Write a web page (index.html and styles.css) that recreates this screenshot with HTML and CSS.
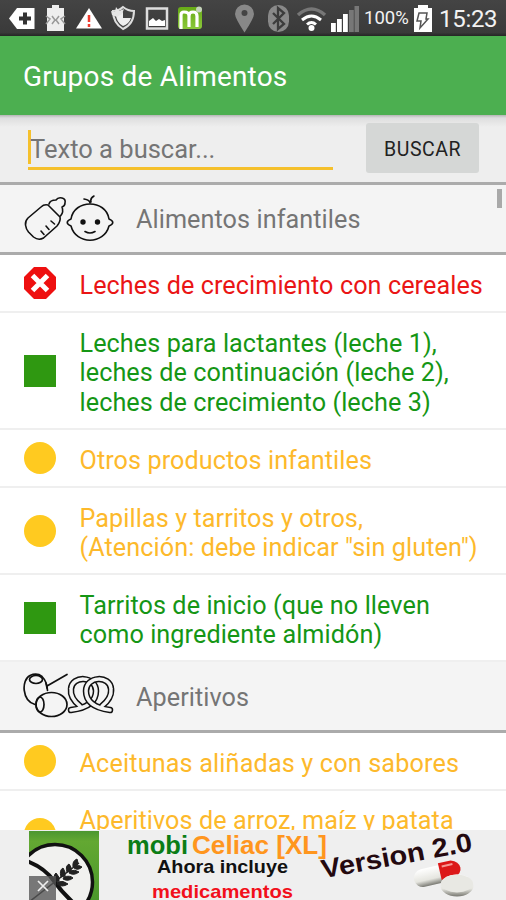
FILE: index.html
```html
<!DOCTYPE html>
<html lang="es">
<head>
    <meta charset="UTF-8">
    <meta name="viewport" content="width=device-width, initial-scale=1.0">
    <title>Grupos de Alimentos</title>
    <link rel="stylesheet" href="styles.css">
</head>
<body>
    <div class="screen">
        <div class="status-bar">
            <svg width="31" height="36" viewBox="9 0 31 36"><path d="M9 18.500L17 8h17.500v21H17z" fill="#fff"/><path d="M25 12.500v12M19 18.500h12" stroke="#333" stroke-width="4"/></svg>
            <svg width="30" height="36" viewBox="40 0 30 36"><path d="M47 8h5V5h7v3h5v23H47z" fill="#eee"/><path d="M46 16l4 3-4 5M52 16l3 4-3 4M59 16l-3 4 3 4M65 16l-4 3 4 5" fill="none" stroke="#999" stroke-width="1.500"/></svg>
            <svg width="36" height="36" viewBox="70 0 36 36"><path d="M89 8l13 20.500H76z" fill="#fff"/><path d="M89 15v7M89 24v3" stroke="#f03a2e" stroke-width="2.500"/></svg>
            <svg width="34" height="36" viewBox="106 0 34 36"><path d="M113 11q6 0 10-4 5 4 11 4 0 13-11 18-10-6-10-18z" fill="#444" stroke="#ddd" stroke-width="2"/><path d="M123 12v14q-7-4-7-12zM123 18h8q-2 6-8 8z" fill="#eee"/><path d="M111 11l4 1 1-5 3 4 5-2-2 5-5 3-5-2z" fill="#e5e5e5"/></svg>
            <svg width="33" height="36" viewBox="140 0 33 36"><rect x="147" y="8.500" width="20" height="20" fill="none" stroke="#ddd" stroke-width="2.500"/><path d="M149 26v-5l4-3 3 3 3-2 3 2 3-1v6z" fill="#fff"/></svg>
            <svg width="57" height="36" viewBox="173 0 57 36"><defs><linearGradient id="lime" x2="0" y2="1"><stop stop-color="#67aa16"/><stop offset="1" stop-color="#8bc83b"/></linearGradient></defs><rect x="178" y="7" width="24" height="22" rx="3" fill="url(#lime)"/><path d="M181 29V15q0-3 3-3 5 0 5 4v11M189 16q0-4 4-4 4 0 4 4v11" fill="none" stroke="#fff" stroke-width="3.200"/><circle cx="199" cy="9.500" r="3" fill="#c5d2bd"/></svg>
            <svg width="30" height="36" viewBox="230 0 30 36"><path d="M244.500 32.500Q235 18 235 14a9.500 9.500 0 0 1 19 0q0 4-9.500 18.500z" fill="#888"/><circle cx="244.500" cy="13" r="3" fill="#444"/></svg>
            <svg width="33" height="36" viewBox="260 0 33 36"><rect x="268" y="5" width="21" height="27" rx="10.500" fill="#898989"/><path d="M273 13l11 11-6 5V8l6 5-11 11" fill="none" stroke="#3c3c3c" stroke-width="2.300"/></svg>
            <svg width="35" height="36" viewBox="293 0 35 36"><path d="M298 15q13.500-12 27 0" fill="none" stroke="#777" stroke-width="3.500"/><path d="M302 20q9.500-8 19 0M307 24.500q4.500-4 9 0" fill="none" stroke="#fff" stroke-width="3"/><circle cx="311.500" cy="28" r="3" fill="#fff"/></svg>
            <svg width="36" height="36" viewBox="328 0 36 36"><path d="M331 23h4.800v9H331zM337 19h4.800v13H337zM343 14h4.800v18H343z" fill="#fff"/><path d="M349 10h4.800v22H349zM354.500 6h4.500v26h-4.500z" fill="#777"/></svg>
            <span class="percent">100%</span>
            <svg width="28" height="36" viewBox="411 0 28 36"><path d="M414 8h4V5h10v3h4v24h-18z" fill="#fff"/><path d="M419 13h8l-1 6h2l-8 9 1-7h-4z" fill="none" stroke="#555" stroke-width="1.500"/></svg>
            <span class="clock">15:23</span>
        </div>

        <h1 class="app-bar"><span>Grupos de Alimentos</span></h1>

        <div class="search">
            <div class="search-field"><span>Texto a buscar...</span></div>
            <button class="search-button"><span>BUSCAR</span></button>
        </div>

        <div class="list">
            <div class="group first">
                <svg class="group-icon" width="92" height="48" viewBox="23 195 92 48">
                    <g fill="none" stroke="#111" stroke-width="1.600" stroke-linecap="round" stroke-linejoin="round">
                        <path d="M48 205q-4-1-7 2L28 218q-3 3-2.500 7 .5 4 3 7l5 5q5 4 10 1L57 226q4-5 3-9z"/>
                        <path d="M49 204q1-4 7-4 2-3 6-2 4 1 3 5 0 3-3 4 2 5-1.500 9"/>
                        <path d="M51 221l3.500 3M46 226l3 3.500M41 231l3 3.500"/>
                        <path d="M71 219c3-20 35-20 38 0 5 2 5 5 0 7-5 19-33 19-38 0-5-2-5-5 0-7z"/>
                        <path d="M90 203q0-3-6-4M91 202q-1-4 3-6M85 231.500q5 3 10 0"/>
                    </g>
                    <circle cx="83" cy="222" r="2.700" fill="#111"/>
                    <circle cx="97.500" cy="222" r="2.700" fill="#111"/>
                </svg>
                <span class="group-name">Alimentos infantiles</span>
            </div>
            <div class="item red">
                <svg class="mark" width="32" height="32" viewBox="0 0 32 32"><path d="M10 0h12l10 10v12L22 32H10L0 22V10z" fill="#ee1010"/><path d="M8.500 8.500l15 15M23.500 8.500l-15 15" stroke="#fff" stroke-width="5"/></svg>
                <p>Leches de crecimiento con cereales</p>
            </div>
            <div class="item green three">
                <span class="mark square"></span>
                <p>Leches para lactantes (leche 1),<br>leches de continuación (leche 2),<br>leches de crecimiento (leche 3)</p>
            </div>
            <div class="item yellow">
                <span class="mark circle"></span>
                <p>Otros productos infantiles</p>
            </div>
            <div class="item yellow two">
                <span class="mark circle"></span>
                <p>Papillas y tarritos y otros,<br>(Atención: debe indicar "sin gluten")</p>
            </div>
            <div class="item green two">
                <span class="mark square"></span>
                <p>Tarritos de inicio (que no lleven<br>como ingrediente almidón)</p>
            </div>
            <div class="group">
                <svg class="group-icon" width="92" height="48" viewBox="23 672 92 48">
                    <g fill="none" stroke="#111" stroke-width="1.700" stroke-linecap="round">
                        <path d="M35 704.500C22 701 21 680 30 675.500q7-3 12 1 5 5 5.500 14"/>
                        <ellipse cx="36" cy="679.500" rx="6.500" ry="4"/>
                        <path d="M47 686L67 674.500M46 683l1 5"/>
                        <ellipse cx="51.500" cy="704.500" rx="15.500" ry="12"/>
                        <ellipse cx="40" cy="704.500" rx="4" ry="7.500"/>
                    </g>
                    <!-- pretzel: dark rope with a light core -->
                    <g fill="none" stroke-linecap="round">
                        <path d="M80 706C75 702 70 697 71 689C72 675 96 676 96 691C96 702 87 708 71 710" stroke="#111" stroke-width="6.500"/>
                        <path d="M80 706C75 702 70 697 71 689C72 675 96 676 96 691C96 702 87 708 71 710" stroke="#f4f4f4" stroke-width="3.500"/>
                        <path d="M102 706C107 702 112 697 111 689C110 675 86 676 86 691C86 702 95 708 110 710" stroke="#111" stroke-width="6.500"/>
                        <path d="M102 706C107 702 112 697 111 689C110 675 86 676 86 691C86 702 95 708 110 710" stroke="#f4f4f4" stroke-width="3.500"/>
                    </g>
                </svg>
                <span class="group-name">Aperitivos</span>
            </div>
            <div class="item yellow wide">
                <span class="mark circle"></span>
                <p>Aceitunas aliñadas y con sabores</p>
            </div>
            <div class="item yellow two last">
                <span class="mark circle"></span>
                <p>Aperitivos de arroz, maíz y patata</p>
            </div>
            <div class="scroll-thumb"></div>
        </div>

        <div class="banner">
            <svg width="506" height="70" viewBox="0 830 506 70">
                <defs>
                    <clipPath id="logo"><path d="M29 831h70v69H29z"/></clipPath>
                    <linearGradient id="leaf" x2="0" y2="1"><stop stop-color="#4b9630"/><stop offset=".15" stop-color="#63a832"/><stop offset="1" stop-color="#4b982b"/></linearGradient>
                    <linearGradient id="pill" x2="0" y2="1"><stop stop-color="#fff"/><stop offset=".65" stop-color="#e5e5df"/><stop offset="1" stop-color="#777770"/></linearGradient>
                </defs>
                <g clip-path="url(#logo)">
                    <path d="M29 831h70v69H29z" fill="url(#leaf)"/>
                    <circle cx="55" cy="882" r="37.500" fill="#f1f1ef" stroke="#111" stroke-width="3.500"/>
                    <path d="M27 861q18 7 27 20t22 24" fill="none" stroke="#111" stroke-width="4"/>
                    <path d="M29 902L79 863" stroke="#222" stroke-width="1.500"/>
                    <g fill="#222">
                        <path d="M55 882q-2-7 1-9 4 4 3 8zM61 877q-2-7 2-9 3 4 2 8zM67 872q-2-6 2-8 3 3 2 7zM73 867q-1-6 4-8 2 4 0 7zM58 882q5-2 10 2-6 4-11 0zM64 877q6-2 9 1-5 4-10 1zM70 871q5-2 9 1-5 4-10 1zM75 867q4-3 7 0-4 4-8 1z" stroke="#222"/>
                    </g>
                </g>
                <path d="M29 876h27v24H29z" fill="#555" fill-opacity=".78"/>
                <path d="M38 881l10 10M48 881l-10 10" stroke="#eee" stroke-width="1.700"/>
                <g class="banner-text">
                    <text class="brand" x="127" y="853.500" textLength="61" lengthAdjust="spacingAndGlyphs" fill="#0b7d16">mobi</text>
                    <text class="brand orange" x="192" y="854" textLength="135" lengthAdjust="spacingAndGlyphs" fill="#ff961e">Celiac [XL]</text>
                    <text class="copy" x="157" y="873" textLength="131" lengthAdjust="spacingAndGlyphs" fill="#111">Ahora incluye</text>
                    <text class="copy" x="152" y="897.500" textLength="141" lengthAdjust="spacingAndGlyphs" fill="#f2101b">medicamentos</text>
                    <text class="version" x="0" y="0" textLength="153" lengthAdjust="spacingAndGlyphs" fill="#24090f" transform="translate(323 878.500) rotate(-10.500)">Version 2.0</text>
                </g>
                <g transform="rotate(-13 436 873)">
                    <rect x="413" y="866" width="46" height="18" rx="9" fill="url(#pill)"/>
                    <path d="M440 864h13q8 3 8 9t-8 8h-13z" fill="#dc1818"/>
                    <path d="M443 868h11" stroke="#f59a94" stroke-width="2"/>
                </g>
                <ellipse cx="457" cy="885.500" rx="16.500" ry="11" fill="url(#pill)"/>
                <ellipse cx="457" cy="883.500" rx="16" ry="9" fill="#e8e8e3"/>
            </svg>
        </div>
    </div>
</body>
</html>
```

FILE: styles.css
```css
* {
    box-sizing: border-box;
}
body {
    margin: 0;
    font-family: Roboto, sans-serif;
    background-color: #fff;
}
.screen {
    width: 506px;
    height: 900px;
    display: flex;
    flex-direction: column;
    overflow: hidden;
}
.status-bar {
    height: 36px;
    flex: none;
    display: flex;
    align-items: center;
    padding-left: 9px;
    background: linear-gradient(#444, #3a3a3a 90%, #252525);
    color: #f2f2f2;
    white-space: nowrap;
}
.status-bar svg {
    flex: none;
}
.percent {
    width: 47px;
    font-size: 18.5px;
}
.clock {
    padding-top: 1px;
    font-size: 24px;
    letter-spacing: -0.3px;
}
.app-bar {
    height: 79px;
    flex: none;
    display: flex;
    align-items: center;
    margin: 0;
    padding: 2px 23px 0;
    background-color: #4caf50;
    color: #fff;
    font-size: 28px;
    font-weight: 400;
    letter-spacing: 0.2px;
}
.search {
    height: 67px;
    flex: none;
    display: flex;
    justify-content: space-between;
    align-items: flex-start;
    padding: 8px 27px 0 28px;
    background: linear-gradient(#b5b5b5, #dedede 3px, #eee 12px);
}
.search-field {
    width: 305px;
    height: 47px;
    padding-top: 7px;
    border-bottom: 3px solid #f5c02c;
    color: #757575;
    font-size: 25.5px;
}
.search-field span {
    display: block;
    height: 34px;
    border-left: 3px solid #f5c02c;
    line-height: 38px;
    text-indent: -1px;
}
.search-button {
    width: 113px;
    height: 50px;
    border: none;
    border-radius: 3px;
    padding: 2px 0 0;
    background-color: #d5d7d6;
    color: #222;
    font-family: inherit;
    font-size: 19.5px;
    letter-spacing: 0.5px;
}
.list {
    position: relative;
    flex: 1;
    min-height: 0;
    overflow: hidden;
}
.group {
    height: 71px;
    display: flex;
    align-items: center;
    padding: 0 23px;
    border-bottom: 3px solid #ababab;
    background-color: #f4f4f4;
}
.group.first {
    height: 73px;
    border-top: 3px solid #ababab;
}
.group-name {
    margin-left: 21px;
    padding-top: 2px;
    color: #757575;
    font-size: 25.2px;
    letter-spacing: 0.08px;
}
.item {
    height: 58px;
    display: flex;
    align-items: center;
    padding-left: 24px;
    border-bottom: 2px solid #efefef;
    font-size: 25.2px;
    line-height: 29.5px;
    letter-spacing: 0.08px;
    white-space: nowrap;
}
.item.two {
    height: 87px;
}
.item.three {
    height: 117px;
}
.item.wide {
    letter-spacing: 0.16px;
}
.item p {
    margin: 0 0 0 23.5px;
    padding-top: 5px;
}
.item.last {
    align-items: flex-start;
}
.item.last p {
    padding-top: 15px;
}
.item.last .mark {
    margin-top: 27px;
}
.red {
    color: #ea1515;
}
.green {
    color: #159615;
}
.yellow {
    color: #fdb92b;
}
.mark {
    width: 32px;
    height: 32px;
    flex: none;
}
.square {
    background-color: #2f9811;
}
.circle {
    border-radius: 50%;
    background-color: #ffca20;
}
.scroll-thumb {
    position: absolute;
    top: 7px;
    right: 4px;
    width: 5px;
    height: 19px;
    background-color: #a9a9a9;
}
.banner {
    height: 70px;
    flex: none;
    background-color: #efefef;
}
.banner svg {
    display: block;
}
.banner-text {
    font-family: "Liberation Sans", Arial, sans-serif;
    font-weight: bold;
}
.brand {
    font-size: 25px;
}
.brand.orange {
    font-size: 26px;
}
.copy {
    font-size: 19px;
}
.version {
    font-size: 26.5px;
}
```
